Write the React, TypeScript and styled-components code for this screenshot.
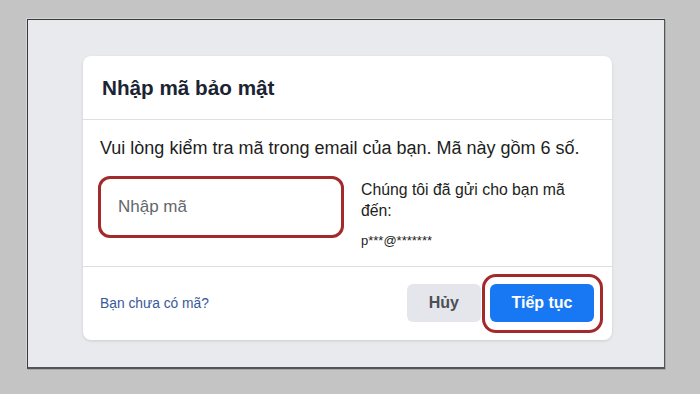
import React from "react";
import styled, { createGlobalStyle } from "styled-components";

const GlobalStyle = createGlobalStyle`
  html, body {
    margin: 0;
    padding: 0;
    background: #c4c4c4;
  }
  * {
    box-sizing: border-box;
  }
`;

const Page = styled.div`
  width: 700px;
  height: 394px;
  padding: 19px 35px 25px 27px;
  background: #c4c4c4;
  font-family: "Liberation Sans", Arial, sans-serif;
`;

const Frame = styled.div`
  height: 350px;
  padding: 36px 52px 0 55px;
  background: #e9eaee;
  border: 1px solid #3a3a3a;
  border-right-color: #555;
  border-bottom: 2px solid #555;
  box-shadow: -1px -1px 0 #d6d6d6, 1px 1px 0 #a8a8a8;
`;

const Card = styled.div`
  width: 529px;
  height: 284px;
  background: #fff;
  border-radius: 8px;
  box-shadow: 0 1px 3px rgba(0, 0, 0, 0.12);
  display: flex;
  flex-direction: column;
`;

const Header = styled.div`
  height: 64px;
  padding: 0 19px;
  display: flex;
  align-items: center;
  border-bottom: 1px solid #dddfe2;
`;

const Title = styled.h2`
  margin: 0;
  font-size: 20.7px;
  font-weight: 700;
  color: #1c2433;
`;

const Body = styled.div`
  padding: 18px 17px 0 17px;
  height: 147px;
  border-bottom: 1px solid #dddfe2;
`;

const Lead = styled.p`
  margin: 0 0 18px 0;
  font-size: 18px;
  line-height: 20px;
  color: #1c1e21;
  white-space: nowrap;
`;

const Row = styled.div`
  display: flex;
  align-items: flex-start;
`;

const CodeInput = styled.input`
  width: 246px;
  height: 62px;
  margin-left: -2px;
  padding: 0 17px;
  border: 3px solid #a3292b;
  border-radius: 12px;
  font-family: inherit;
  font-size: 17px;
  color: #1c1e21;
  outline: none;
  &::placeholder {
    color: #65676b;
  }
`;

const SentInfo = styled.div`
  margin-left: 17px;
  padding-top: 3px;
  font-size: 15.8px;
  line-height: 21px;
  color: #1c1e21;
`;

const Address = styled.div`
  margin-top: 9px;
  font-size: 13px;
`;

const Footer = styled.div`
  flex: 1;
  display: flex;
  align-items: center;
  padding: 0 9px 1px 17px;
`;

const Link = styled.a`
  font-size: 13.8px;
  color: #385898;
  text-decoration: none;
  cursor: pointer;
`;

const Actions = styled.div`
  margin-left: auto;
  display: flex;
  align-items: center;
  gap: 1px;
`;

const Button = styled.button<{ $primary?: boolean }>`
  height: 38px;
  padding: 0 ${(p) => (p.$primary ? "21px" : "22px")};
  min-width: ${(p) => (p.$primary ? "104px" : "74px")};
  border: none;
  border-radius: 6px;
  font-family: inherit;
  font-size: 16px;
  font-weight: 700;
  cursor: pointer;
  background: ${(p) => (p.$primary ? "#1877f2" : "#e4e6eb")};
  color: ${(p) => (p.$primary ? "#fff" : "#4b4f56")};
`;

const Highlight = styled.div`
  padding: 7px 6px 8px 5px;
  border: 3px solid #a3292b;
  border-radius: 14px;
`;

export default function App() {
  return (
    <>
      <GlobalStyle />
      <Page>
        <Frame>
          <Card>
            <Header>
              <Title>Nhập mã bảo mật</Title>
            </Header>
            <Body>
              <Lead>
                Vui lòng kiểm tra mã trong email của bạn. Mã này gồm 6 số.
              </Lead>
              <Row>
                <CodeInput placeholder="Nhập mã" />
                <SentInfo>
                  Chúng tôi đã gửi cho bạn mã
                  <br />
                  đến:
                  <Address>p***@*******</Address>
                </SentInfo>
              </Row>
            </Body>
            <Footer>
              <Link>Bạn chưa có mã?</Link>
              <Actions>
                <Button>Hủy</Button>
                <Highlight>
                  <Button $primary>Tiếp tục</Button>
                </Highlight>
              </Actions>
            </Footer>
          </Card>
        </Frame>
      </Page>
    </>
  );
}
